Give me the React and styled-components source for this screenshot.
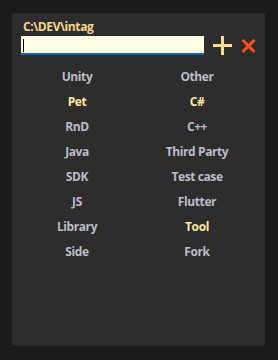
import React, { useState } from 'react';
import styled, { createGlobalStyle } from 'styled-components';

const GlobalStyle = createGlobalStyle`
  html, body {
    margin: 0;
    padding: 0;
    background: #1b1b1b;
    font-family: "Open Sans", "Liberation Sans", sans-serif;
  }
`;

const Panel = styled.div`
  box-sizing: border-box;
  width: 253px;
  height: 333px;
  margin: 13px 0 0 12px;
  background: #2d2d2d;
  border-radius: 2px;
  padding: 6px 0 0 9px;
`;

const Path = styled.div`
  color: #f5d98c;
  font-size: 12px;
  font-weight: 700;
  letter-spacing: -0.4px;
  line-height: 16px;
  padding-left: 2px;
`;

const Header = styled.div`
  display: flex;
  align-items: center;
  gap: 9px;
  margin-top: 1px;
`;

const InputWrap = styled.div`
  position: relative;
  display: flex;
`;

const NameInput = styled.input`
  box-sizing: border-box;
  width: 183px;
  height: 19px;
  border: none;
  border-bottom: 2px solid #0b62b8;
  background: #fffde2;
  outline: none;
  padding: 0 3px;
  font-size: 12px;
  font-family: inherit;
  caret-color: transparent;
`;

// static text caret, as in the screenshot
const Caret = styled.span`
  position: absolute;
  left: 2px;
  top: 3px;
  width: 1px;
  height: 13px;
  background: #000;
  pointer-events: none;
`;

const IconButton = styled.button`
  border: none;
  background: none;
  padding: 0;
  display: flex;
  cursor: pointer;
`;

const TagGrid = styled.div`
  display: grid;
  grid-template-columns: 120px 120px;
  grid-auto-rows: 25px;
  margin: 9px 0 0 -4px;
`;

const Tag = styled.div`
  display: flex;
  align-items: center;
  justify-content: center;
  font-size: 12px;
  font-weight: 700;
  letter-spacing: -0.4px;
  color: ${props => (props.active ? '#ffe9a0' : '#bcbcc8')};
  cursor: pointer;
`;

const tags = [
  ['Unity', false], ['Other', false],
  ['Pet', true], ['C#', true],
  ['RnD', false], ['C++', false],
  ['Java', false], ['Third Party', false],
  ['SDK', false], ['Test case', false],
  ['JS', false], ['Flutter', false],
  ['Library', false], ['Tool', true],
  ['Side', false], ['Fork', false],
];

const App = () => {
  const [name, setName] = useState('');

  return (
    <>
      <GlobalStyle />
      <Panel>
        <Path>C:\DEV\intag</Path>
        <Header>
          <InputWrap>
            <NameInput value={name} onChange={e => setName(e.target.value)} />
            {!name && <Caret />}
          </InputWrap>
          <IconButton>
            <svg width="19" height="19" viewBox="0 0 19 19">
              <path d="M9.5 0v19M0 9.5h19" stroke="#ffdf8c" strokeWidth="3" />
            </svg>
          </IconButton>
          <IconButton>
            <svg width="15" height="14" viewBox="0 0 15 14">
              <path d="M1.5 1L13.5 13M13.5 1L1.5 13" stroke="#ff4e1c" strokeWidth="3" />
            </svg>
          </IconButton>
        </Header>
        <TagGrid>
          {tags.map(([label, active]) => (
            <Tag key={label} active={active}>{label}</Tag>
          ))}
        </TagGrid>
      </Panel>
    </>
  );
};

export default App;
